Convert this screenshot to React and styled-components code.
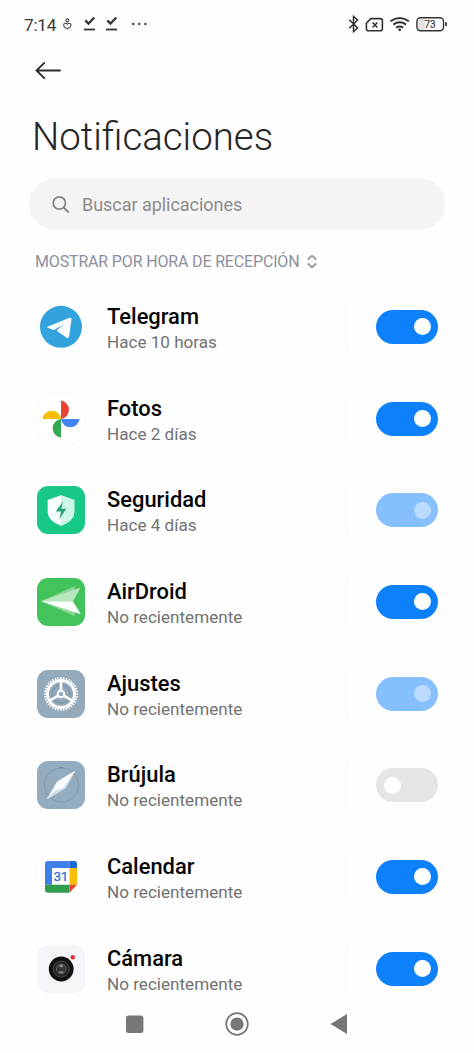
import styled, { createGlobalStyle } from 'styled-components';

const GlobalStyle = createGlobalStyle`
  * {
    box-sizing: border-box;
  }

  body {
    margin: 0;
    background: #fefefe;
    font-family: Roboto, sans-serif;
  }

  svg {
    display: block;
    flex: none;
  }
`;

const Screen = styled.div`
  display: flex;
  flex-direction: column;
  width: 474px;
  height: 1053px;
  overflow: hidden;
  background: #fefefe;
`;

const StatusBar = styled.div`
  display: flex;
  align-items: center;
  justify-content: space-between;
  height: 48px;
  padding: 0 27px 0 24px;
  color: #3a3a3a;
`;

const StatusGroup = styled.div`
  display: flex;
  align-items: center;
`;

const Clock = styled.span`
  width: 38px;
  font-size: 17.2px;
  line-height: 20px;
  letter-spacing: -0.25px;
  padding-top: 1px;
`;

const BackButton = styled.button`
  display: flex;
  align-items: center;
  width: 60px;
  height: 44px;
  margin-left: 29px;
  padding: 0 0 0 6px;
  border: 0;
  background: none;
`;

const Title = styled.h1`
  height: 86px;
  margin: 0;
  padding: 22px 0 0 32px;
  color: #262626;
  font-size: 38.4px;
  font-weight: 300;
  line-height: 46px;
`;

const SearchBox = styled.div`
  display: flex;
  align-items: center;
  gap: 12px;
  height: 52px;
  margin: 0 29px;
  padding: 1px 0 0 23px;
  border-radius: 26px;
  background: #f4f4f4;
  color: #8c8c8c;
  font-size: 18px;
  line-height: 24px;
  letter-spacing: -0.04px;
`;

const SortLabel = styled.div`
  display: flex;
  align-items: center;
  gap: 8px;
  height: 51px;
  padding: 12px 0 0 35px;
  color: #8b8e9c;
  font-size: 16px;
  line-height: 20px;
  letter-spacing: -0.16px;
`;

const AppList = styled.div`
  flex: 1;
  min-height: 0;
  overflow: hidden;
`;

const AppRow = styled.div`
  display: flex;
  align-items: center;
  height: 91.7px;
  padding: 0 36px 0 37px;
`;

const AppInfo = styled.div`
  flex: 1;
  margin-left: 22px;
  padding-top: 3px;
`;

const AppName = styled.div`
  color: #050505;
  font-size: 21.9px;
  font-weight: 500;
  line-height: 27px;
`;

const AppTime = styled.div`
  color: #727272;
  font-size: 17.1px;
  line-height: 24px;
`;

const Divider = styled.div`
  width: 1px;
  height: 48px;
  margin-right: 29px;
  background: #f6f6f6;
`;

const trackColors = {
  on: '#0d80fb',
  locked: '#86bffd',
  off: '#e5e5e5',
};

const Toggle = styled.div`
  display: flex;
  align-items: center;
  justify-content: ${props => (props.$state === 'off' ? 'flex-start' : 'flex-end')};
  width: 62px;
  height: 34px;
  padding: 0 7.5px;
  border-radius: 17px;
  background: ${props => trackColors[props.$state]};

  &::after {
    content: "";
    width: 17px;
    height: 17px;
    border-radius: 50%;
    background: ${props => (props.$state === 'locked' ? '#bbdbfe' : '#ffffff')};
  }
`;

const NavBar = styled.div`
  display: grid;
  grid-template-columns: repeat(3, 102px);
  justify-content: center;
  justify-items: center;
  align-items: center;
  height: 58px;
  background: #fefefe;
`;

const DownloadDone = () => (
  <svg width="22" height="18" viewBox="0 0 22 18" fill="none" stroke="#333">
    <path d="M5.3 5.4 8.5 8.6 14.3 2.6" strokeWidth="2.2" />
    <path d="M4 14.5h11" strokeWidth="1.8" />
  </svg>
);

const StatusLeft = () => (
  <StatusGroup>
    <Clock>7:14</Clock>
    <svg width="18" height="18" viewBox="0 0 18 18" fill="none" stroke="#4a4a4a" strokeWidth="1.1">
      <circle cx="5.3" cy="5.4" r="1.5" />
      <path d="M5.3 13.8C3.3 12.8 1.6 11.5 1.6 10c0-1.7 2.5-2.6 3.7-.8 1.2-1.8 3.7-.9 3.7.8 0 1.5-1.7 2.8-3.7 3.8z" />
    </svg>
    <DownloadDone />
    <DownloadDone />
    <svg width="26" height="18" viewBox="0 0 26 18" fill="#444">
      <circle cx="9.2" cy="9" r="1.2" />
      <circle cx="15.3" cy="9" r="1.2" />
      <circle cx="21.4" cy="9" r="1.2" />
    </svg>
  </StatusGroup>
);

const StatusRight = () => (
  <svg width="102" height="20" viewBox="345 14 102 20" fill="none" stroke="#333">
    <path d="M349.3 19.7 357.6 28 353.5 31.5V16.5L357.6 20 349.3 28.3" strokeWidth="1.5" />
    <path d="M370.8 18.6h9.6q2 0 2 2v8.2q0 2-2 2h-12q-2 0-2-2v-5.6z" strokeWidth="1.6" strokeLinejoin="round" />
    <path d="m372.6 22.4 4.8 5M377.4 22.4l-4.8 5" strokeWidth="1.5" />
    <path d="M390.4 21.3q9.3-6.7 18.6 0" strokeWidth="2" />
    <path d="M393.3 24.6q6.4-4.5 12.8 0M396.2 27.6q3.5-2.4 7 0" strokeWidth="2" />
    <circle cx="399.7" cy="29.8" r="1.4" fill="#333" stroke="none" />
    <rect x="418" y="19" width="7" height="11" rx="2" fill="#e3e3e3" stroke="none" />
    <rect x="416.9" y="17.8" width="26.6" height="12.9" rx="3.6" strokeWidth="1.4" />
    <path d="M446 22.3v3.8" strokeWidth="1.8" />
    <text x="430" y="28" textAnchor="middle" fontSize="10" fill="#3c3c3c" stroke="#3c3c3c" strokeWidth=".2">73</text>
  </svg>
);

const TelegramIcon = () => (
  <svg width="48" height="48" viewBox="0 0 48 48">
    <circle cx="24" cy="23.8" r="21" fill="#32a3dc" />
    <path d="M10.6 24.2 32.8 15.2q1.5-.4 1.2 1.2L31.6 33.6q-.3 1.6-1.6.8L20.2 27.6 29.6 19.4 16.8 26.6z" fill="#fff" stroke="#fff" strokeWidth="1" strokeLinejoin="round" />
  </svg>
);

const PhotosIcon = () => (
  <svg width="48" height="48" viewBox="0 0 48 48">
    <rect x=".5" y=".5" width="47" height="47" rx="11" fill="#fff" stroke="#f8f8f8" />
    <path d="M24 5.6a9.3 9.3 0 0 1 0 18.4z" fill="#e94335" />
    <path d="M5.5 24a9.3 9.3 0 0 1 18.5 0z" fill="#fbbc04" />
    <path d="M24 24h18.5a9.3 9.3 0 0 1-18.5 0z" fill="#4285f4" />
    <path d="M24 24v18.5a9.3 9.3 0 0 1 0-18.5z" fill="#34a853" />
  </svg>
);

const SecurityIcon = () => (
  <svg width="48" height="48" viewBox="0 0 48 48">
    <rect width="48" height="48" rx="11" fill="#18c886" />
    <path d="M24 9.2 37.3 14v12.2q0 8.6-13.3 13.6-13.3-5-13.3-13.6V14z" fill="#f8fffc" />
    <path d="M24 9.2 37.3 14v12.2q0 8.6-13.3 13.6z" fill="#cef6e8" />
    <path d="M26 15.2 18.8 25.5H24L22.2 33.2 29.3 22.8H24.3z" fill="#27a37a" />
  </svg>
);

const AirDroidIcon = () => (
  <svg width="48" height="48" viewBox="0 0 48 48">
    <rect width="48" height="48" rx="11" fill="#42c35b" />
    <path d="M4 23.3 38 8 36 23.5 38 38.3z" fill="#8ed797" />
    <path d="M4 23.3 43.5 9.5 36 23.5z" fill="#b5e6bc" />
    <path d="M4 23.3 36 23.5 43.8 36.3z" fill="#fff" />
  </svg>
);

const teeth = Array.from({ length: 36 }, (_, i) => i * 10);

const SettingsIcon = () => (
  <svg width="48" height="48" viewBox="0 0 48 48" fill="none" stroke="#fff">
    <rect width="48" height="48" rx="11" fill="#94a9b9" stroke="none" />
    <circle cx="24" cy="24" r="9" stroke="#6f8799" strokeOpacity=".45" strokeWidth="2" />
    <circle cx="24" cy="24" r="13.4" strokeWidth="2.6" />
    {teeth.map(angle => (
      <path key={angle} d="M24 7v3" strokeWidth="1.5" transform={`rotate(${angle} 24 24)`} />
    ))}
    <circle cx="24" cy="24" r="3.3" strokeWidth="2" />
    <path d="M24 20.5V10.5M21 25.8l-8.8 5M27 25.8l8.8 5" strokeWidth="2.6" />
  </svg>
);

const CompassIcon = () => (
  <svg width="48" height="48" viewBox="0 0 48 48">
    <rect width="48" height="48" rx="11" fill="#93acc0" />
    <circle cx="24.5" cy="24" r="17" fill="none" stroke="#7c94a7" strokeWidth=".8" />
    <path d="M22.5 6.5h4" stroke="#6c8496" />
    <path d="M38.3 9.5 20.2 20.5 9.8 38.3 28.8 27z" fill="#f8fcff" />
    <path d="M38.3 9.5 28.8 27 9.8 38.3 18.5 29.2 26 27.6z" fill="#c9deed" />
  </svg>
);

const CalendarIcon = () => (
  <svg width="48" height="48" viewBox="0 0 48 48">
    <rect width="48" height="48" rx="11" fill="#fff" />
    <path d="M8 11q0-3 3-3h21.5v7H15v16.8H8z" fill="#3f7fe8" />
    <path d="M32.5 8H37q3 0 3 3v4h-7.5z" fill="#1967d2" />
    <path d="M32.5 15H40v16.8h-7.5z" fill="#fbbc04" />
    <path d="M8 31.8h24.5v8H11q-3 0-3-3z" fill="#2f9d4d" />
    <path d="M32.5 31.8H40l-7.5 8z" fill="#ea4335" />
    <text x="23.7" y="28.3" textAnchor="middle" fontSize="13.5" letterSpacing="-.4" fill="#3474d2" stroke="#3474d2" strokeWidth=".3">31</text>
  </svg>
);

const CameraIcon = () => (
  <svg width="48" height="48" viewBox="0 0 48 48">
    <rect width="48" height="48" rx="11" fill="#f3f5f8" />
    <circle cx="24.2" cy="24" r="12.4" fill="#111" />
    <circle cx="24.2" cy="24" r="8" fill="#242424" stroke="#474747" />
    <circle cx="24.2" cy="24" r="4.8" fill="#353535" stroke="#666" strokeWidth=".8" />
    <ellipse cx="24.2" cy="20.8" rx="2" ry="1.6" fill="#888" />
    <ellipse cx="24.2" cy="27.3" rx="2.6" ry="1.2" fill="#777" />
    <circle cx="35.8" cy="12.3" r="2.2" fill="#e8283c" />
  </svg>
);

const apps = [
  { name: 'Telegram', time: 'Hace 10 horas', Icon: TelegramIcon, state: 'on' },
  { name: 'Fotos', time: 'Hace 2 días', Icon: PhotosIcon, state: 'on' },
  { name: 'Seguridad', time: 'Hace 4 días', Icon: SecurityIcon, state: 'locked' },
  { name: 'AirDroid', time: 'No recientemente', Icon: AirDroidIcon, state: 'on' },
  { name: 'Ajustes', time: 'No recientemente', Icon: SettingsIcon, state: 'locked' },
  { name: 'Brújula', time: 'No recientemente', Icon: CompassIcon, state: 'off' },
  { name: 'Calendar', time: 'No recientemente', Icon: CalendarIcon, state: 'on' },
  { name: 'Cámara', time: 'No recientemente', Icon: CameraIcon, state: 'on' },
];

function App() {
  return (
    <>
      <GlobalStyle />
      <Screen>
        <StatusBar>
          <StatusLeft />
          <StatusRight />
        </StatusBar>
        <BackButton aria-label="Atrás">
          <svg width="28" height="20" viewBox="0 0 28 20" fill="none" stroke="#2c2c2c" strokeWidth="1.8" strokeLinecap="round">
            <path d="M25 10.5H1.5M9.3 2.8 1.5 10.5l7.8 7.7" />
          </svg>
        </BackButton>
        <Title>Notificaciones</Title>
        <SearchBox>
          <svg width="18" height="18" viewBox="0 0 18 18" fill="none" stroke="#858585" strokeWidth="1.8">
            <circle cx="7.3" cy="7" r="6.1" />
            <path d="m11.7 11.5 5 5" />
          </svg>
          Buscar aplicaciones
        </SearchBox>
        <SortLabel>
          MOSTRAR POR HORA DE RECEPCIÓN
          <svg width="10" height="16" viewBox="0 0 10 16" fill="none" stroke="#8b8e9c" strokeWidth="1.6">
            <path d="m.8 5.6 4.2-4 4.2 4M.8 9.4l4.2 4 4.2-4" />
          </svg>
        </SortLabel>
        <AppList>
          {apps.map(({ name, time, Icon, state }) => (
            <AppRow key={name}>
              <Icon />
              <AppInfo>
                <AppName>{name}</AppName>
                <AppTime>{time}</AppTime>
              </AppInfo>
              <Divider />
              <Toggle $state={state} />
            </AppRow>
          ))}
        </AppList>
        <NavBar>
          <svg width="24" height="24" viewBox="0 0 24 24">
            <rect x="3" y="3.5" width="17.4" height="17.4" rx="2.5" fill="#777" />
          </svg>
          <svg width="24" height="24" viewBox="0 0 24 24">
            <circle cx="12" cy="12" r="10.8" fill="none" stroke="#777" strokeWidth="1.7" />
            <circle cx="12" cy="12" r="6.6" fill="#777" />
          </svg>
          <svg width="24" height="24" viewBox="0 0 24 24">
            <path d="M3.5 12 20 2v20z" fill="#777" />
          </svg>
        </NavBar>
      </Screen>
    </>
  );
}

export default App;
